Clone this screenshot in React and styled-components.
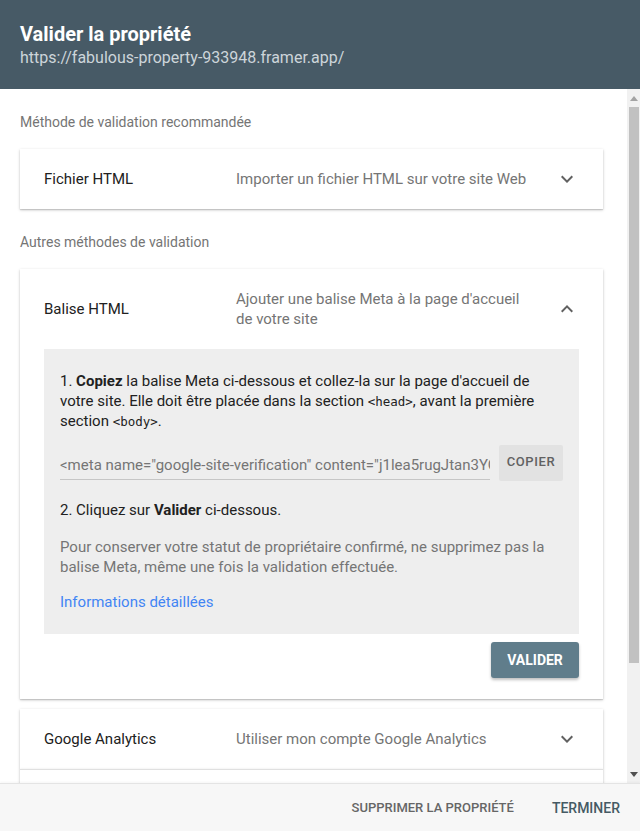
import React from "react";
import styled, { createGlobalStyle } from "styled-components";

const Global = createGlobalStyle`
  html, body { margin: 0; padding: 0; height: 100%; overflow: hidden; }
  body { font-family: Roboto, "Noto Sans", Arial, sans-serif; background: #fff; -webkit-font-smoothing: antialiased; }
  #root { height: 100%; }
`;

const Dialog = styled.div`
  height: 100vh;
  display: flex;
  flex-direction: column;
  background: #fff;
`;

const Header = styled.header`
  background: #475a66;
  padding: 22px 20px 21px;
  flex: none;
`;

const Title = styled.h1`
  margin: 0;
  font-size: 20px;
  line-height: 24px;
  font-weight: 700;
  color: #fff;
`;

const Url = styled.div`
  margin-top: 2px;
  font-size: 16px;
  line-height: 20px;
  color: #cdd5da;
`;

const Body = styled.div`
  flex: 1;
  min-height: 0;
  display: flex;
`;

const Scroller = styled.div`
  flex: 1;
  overflow-y: auto;
  scrollbar-width: none;
  padding: 23px 24px 24px 20px;
  &::-webkit-scrollbar { display: none; }
`;

const Rail = styled.div`
  width: 13px;
  flex: none;
  background: #f1f1f1;
  display: flex;
  flex-direction: column;
`;

const RailArrow = styled.div`
  height: 18px;
  flex: none;
  display: flex;
  align-items: center;
  justify-content: center;
  svg { width: 8px; height: 5px; fill: ${(p) => p.$color}; }
`;

const RailTrack = styled.div`
  flex: 1;
  display: flex;
  flex-direction: column;
`;

const Thumb = styled.div`
  height: 556px;
  margin: 0 1px 0 2px;
  background: #c1c1c1;
`;

const SectionLabel = styled.div`
  font-size: 14px;
  line-height: 20px;
  color: #757575;
  margin-bottom: 17px;
`;

const Card = styled.section`
  background: #fff;
  box-shadow: 0 1px 3px rgba(0, 0, 0, 0.2), 0 1px 1px rgba(0, 0, 0, 0.12);
  border-top: ${(p) => (p.$divided ? "1px solid #e0e0e0" : "none")};
  margin-bottom: ${(p) => p.$mb}px;
`;

const PanelHeader = styled.div`
  display: flex;
  align-items: center;
  padding: 20px 24px;
`;

const PanelTitle = styled.div`
  width: 192px;
  flex: none;
  font-size: 15px;
  line-height: 20px;
  color: #212121;
`;

const PanelDesc = styled.div`
  flex: 1;
  font-size: 15px;
  line-height: 20px;
  color: #757575;
  padding-right: 18px;
`;

const Chevron = styled.svg`
  width: 24px;
  height: 24px;
  margin: -2px 0;
  flex: none;
  fill: #616161;
`;

const PanelBody = styled.div`
  padding: 0 24px 21px;
  display: flex;
  flex-direction: column;
  align-items: flex-end;
`;

const InfoBox = styled.div`
  align-self: stretch;
  background: #eeeeee;
  padding: 22px 16px 22px;
  font-size: 15px;
  line-height: 20px;
  color: #212121;
`;

const Para = styled.p`
  margin: ${(p) => p.$m || "0"};
  color: ${(p) => (p.$muted ? "#757575" : "#212121")};
`;

const Code = styled.code`
  font-family: "DejaVu Sans Mono", "Liberation Mono", monospace;
  font-size: 12.5px;
  line-height: 1;
`;

const CopyRow = styled.div`
  display: flex;
  align-items: center;
  gap: 9px;
  margin: 14px 0 19px;
`;

const MetaInput = styled.input`
  flex: 1;
  min-width: 0;
  border: none;
  border-bottom: 1px solid #c6c6c6;
  background: transparent;
  font-family: Roboto, sans-serif;
  font-size: 15px;
  color: #757575;
  padding: 7px 0 5px;
  margin-top: 2px;
  outline: none;
`;

const CopyButton = styled.button`
  width: 64px;
  height: 36px;
  border: none;
  border-radius: 2px;
  background: #e2e2e2;
  color: #616161;
  font-family: Roboto, sans-serif;
  font-size: 13px;
  font-weight: 500;
  letter-spacing: 0.6px;
  cursor: pointer;
  padding: 0 0 3px;
`;

const Link = styled.a`
  color: #4285f4;
  text-decoration: none;
  display: inline-block;
  margin-top: 15px;
`;

const ValidateButton = styled.button`
  margin-top: 8px;
  width: 88px;
  height: 36px;
  border: none;
  border-radius: 3px;
  background: #607d8b;
  color: #fff;
  font-family: Roboto, sans-serif;
  font-size: 14px;
  font-weight: 700;
  box-shadow: 0 2px 3px rgba(0, 0, 0, 0.25);
  cursor: pointer;
`;

const Footer = styled.footer`
  flex: none;
  height: 48px;
  background: #f7f7f7;
  border-top: 1px solid #e4e4e4;
  box-shadow: 0 -1px 2px rgba(0, 0, 0, 0.04);
  display: flex;
  align-items: center;
  justify-content: flex-end;
  gap: 22px;
  padding: 0 12px 0 20px;
  box-sizing: border-box;
`;

const FooterButton = styled.button`
  border: none;
  background: transparent;
  font-family: Roboto, sans-serif;
  font-size: ${(p) => (p.$primary ? "14px" : "13px")};
  font-weight: 500;
  padding: 0 8px;
  height: 36px;
  color: ${(p) => (p.$primary ? "#455a64" : "#666666")};
  cursor: pointer;
`;

const Down = () => (
  <Chevron viewBox="0 0 24 24"><path d="M16.59 8.59 12 13.17 7.41 8.59 6 10l6 6 6-6z" /></Chevron>
);
const Up = () => (
  <Chevron viewBox="0 0 24 24"><path d="M12 8l-6 6 1.41 1.41L12 10.83l4.59 4.58L18 14z" /></Chevron>
);

const Panel = ({ title, desc, mb = 0, divided }) => (
  <Card $mb={mb} $divided={divided}>
    <PanelHeader>
      <PanelTitle>{title}</PanelTitle>
      <PanelDesc>{desc}</PanelDesc>
      <Down />
    </PanelHeader>
  </Card>
);

export default function App() {
  return (
    <Dialog>
      <Global />
      <Header>
        <Title>Valider la propriété</Title>
        <Url>https://fabulous-property-933948.framer.app/</Url>
      </Header>
      <Body>
        <Scroller>
          <SectionLabel>Méthode de validation recommandée</SectionLabel>
          <Panel title="Fichier HTML" desc="Importer un fichier HTML sur votre site Web" mb={23} />
          <SectionLabel>Autres méthodes de validation</SectionLabel>
          <Card $mb={10}>
            <PanelHeader>
              <PanelTitle>Balise HTML</PanelTitle>
              <PanelDesc>Ajouter une balise Meta à la page d'accueil de votre site</PanelDesc>
              <Up />
            </PanelHeader>
            <PanelBody>
              <InfoBox>
                <Para>
                  1. <b>Copiez</b> la balise Meta ci-dessous et collez-la sur la page d'accueil de votre site. Elle doit être placée dans la section <Code>&lt;head&gt;</Code>, avant la première section <Code>&lt;body&gt;</Code>.
                </Para>
                <CopyRow>
                  <MetaInput
                    readOnly
                    value={'<meta name="google-site-verification" content="j1lea5rugJtan3YC8xq0kP2wZbT7mLhE4sR9vN6dUfoA" />'}
                  />
                  <CopyButton>COPIER</CopyButton>
                </CopyRow>
                <Para>2. Cliquez sur <b>Valider</b> ci-dessous.</Para>
                <Para $muted $m="17px 0 0">
                  Pour conserver votre statut de propriétaire confirmé, ne supprimez pas la balise Meta, même une fois la validation effectuée.
                </Para>
                <Link href="#">Informations détaillées</Link>
              </InfoBox>
              <ValidateButton>VALIDER</ValidateButton>
            </PanelBody>
          </Card>
          <Panel title="Google Analytics" desc="Utiliser mon compte Google Analytics" />
          <Panel title="Google Tag Manager" desc="Utiliser mon compte Google Tag Manager" divided />
          <Panel title="Fournisseur de nom de domaine" desc="Associer un enregistrement DNS à Google" divided />
        </Scroller>
        <Rail>
          <RailArrow $color="#a3a3a3">
            <svg viewBox="0 0 8 5"><polygon points="4,0 8,5 0,5" /></svg>
          </RailArrow>
          <RailTrack>
            <Thumb />
          </RailTrack>
          <RailArrow $color="#505050">
            <svg viewBox="0 0 8 5"><polygon points="0,0 8,0 4,5" /></svg>
          </RailArrow>
        </Rail>
      </Body>
      <Footer>
        <FooterButton>SUPPRIMER LA PROPRIÉTÉ</FooterButton>
        <FooterButton $primary>TERMINER</FooterButton>
      </Footer>
    </Dialog>
  );
}
